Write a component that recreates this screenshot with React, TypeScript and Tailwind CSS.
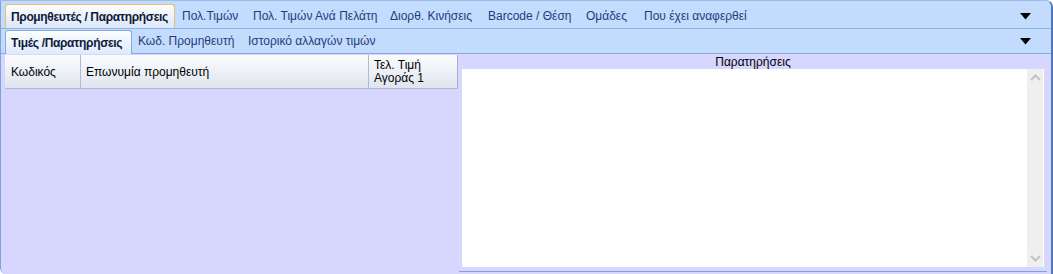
import React from "react";

const font = { fontFamily: '"Liberation Sans", Arial, sans-serif' };

function Arrow() {
  return (
    <svg width="11" height="7" viewBox="0 0 11 7" className="block">
      <path d="M0 0 H11 L5.5 6.5 Z" fill="#000" />
    </svg>
  );
}

export default function App() {
  const tabs1 = [
    { t: "Πολ.Τιμών", w: "w-[71px]" },
    { t: "Πολ. Τιμών Ανά Πελάτη", w: "w-[137px]" },
    { t: "Διορθ. Κινήσεις", w: "w-[98px]" },
    { t: "Barcode / Θέση", w: "w-[98px]" },
    { t: "Ομάδες", w: "w-[58px]" },
    { t: "Που έχει αναφερθεί", w: "w-[120px]" },
  ];
  return (
    <div
      style={font}
      className="w-[1053px] h-[274px] overflow-hidden bg-[#c3dbfd] flex flex-col border-t border-l border-r-2 border-t-[#9fbbe4] border-l-[#7fa3d8] border-r-[#4f76bb] rounded-tr-[7px] rounded-bl-[6px] text-[12px]"
    >
      {/* Row 1 */}
      <div className="h-[27px] flex items-end pl-[4px] pr-[20px] bg-[#c3dbfd] shrink-0">
        <div className="h-[24px] w-[170px] pl-[5px] flex items-center border border-b-0 border-[#e3c36a] rounded-t-[3px] bg-gradient-to-b from-[#fdfdfe] to-[#dce7f8] font-bold text-[#0d1b3d] tracking-[-0.35px]">
          Προμηθευτές / Παρατηρήσεις
        </div>
        {tabs1.map((x) => (
          <div key={x.t} className={`${x.w} h-[24px] pl-[7px] flex items-center text-[#1f3c7c] whitespace-nowrap`}>
            {x.t}
          </div>
        ))}
        <div className="flex-1" />
        <div className="h-[24px] flex items-center">
          <Arrow />
        </div>
      </div>
      {/* Row 2 */}
      <div className="h-[26px] flex items-end pl-[4px] pr-[20px] border-t border-t-[#8fb2e4] border-b border-b-[#86a9db] bg-[#c3dbfd] shrink-0">
        <div className="h-[24px] w-[127px] pl-[5px] flex items-center border border-b-0 border-[#8aaad6] rounded-t-[3px] bg-gradient-to-b from-[#fcfdff] to-[#dfeafa] font-bold text-[#0d1b3d] tracking-[-0.35px] relative top-[1px]">
          Τιμές /Παρατηρήσεις
        </div>
        <div className="w-[110px] h-[24px] pl-[6px] flex items-center text-[#1f3c7c]">Κωδ. Προμηθευτή</div>
        <div className="w-[150px] h-[24px] pl-[6px] flex items-center text-[#1f3c7c] whitespace-nowrap">Ιστορικό αλλαγών τιμών</div>
        <div className="flex-1" />
        <div className="h-[24px] flex items-center">
          <Arrow />
        </div>
      </div>
      {/* Content */}
      <div className="flex-1 flex bg-[#d6d6ff] pl-[4px] pb-[2px] pr-[4px]">
        <div className="w-[453px] flex flex-col">
          <div className="h-[34px] mt-[1px] flex bg-gradient-to-b from-[#fbfcfe] to-[#dfe5ef] border-b border-b-[#a9bdd6] text-[#000]">
            <div className="w-[76px] pl-[6px] flex items-center border-r border-r-[#a9bdd6]">Κωδικός</div>
            <div className="w-[288px] pl-[5px] flex items-center border-r border-r-[#a9bdd6]">Επωνυμία προμηθευτή</div>
            <div className="flex-1 pl-[5px] flex flex-col justify-center leading-[13px] border-r border-r-[#9fb2c8]">
              <span>Τελ. Τιμή</span>
              <span>Αγοράς 1</span>
            </div>
          </div>
          <div className="flex-1" />
        </div>
        <div className="flex-1 flex flex-col ml-[1px] mt-[2px] border-b border-b-[#7fa3d8] rounded-tl-[3px]">
          <div className="h-[13px] text-center leading-[13px] text-black">Παρατηρήσεις</div>
          <div className="flex-1 flex mx-[3px] mb-[4px] bg-white">
            <div className="flex-1" />
            <div className="w-[16px] bg-[#efefef] flex flex-col items-center justify-between py-[5px] mr-[1px]">
              <svg width="11" height="7" viewBox="0 0 11 7">
                <path d="M1 6 L5.5 1.5 L10 6" stroke="#c2c2c2" strokeWidth="2" fill="none" />
              </svg>
              <svg width="11" height="7" viewBox="0 0 11 7">
                <path d="M1 1 L5.5 5.5 L10 1" stroke="#c2c2c2" strokeWidth="2" fill="none" />
              </svg>
            </div>
          </div>
        </div>
      </div>
    </div>
  );
}
